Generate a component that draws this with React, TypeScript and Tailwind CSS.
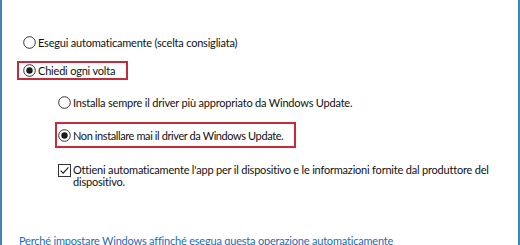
import React from 'react';

const font = { fontFamily: 'Lato, "Noto Sans", sans-serif' };

function Radio({ checked }: { checked?: boolean }) {
    return (
        <svg width="13" height="13" viewBox="0 0 13 13" className="shrink-0">
            <circle cx="6.5" cy="6.5" r="5.8" fill="white" stroke="#333" strokeWidth="1" />
            {checked && <circle cx="6.5" cy="6.5" r="3.2" fill="#1a1a1a" />}
        </svg>
    );
}

function Check() {
    return (
        <svg width="13" height="13" viewBox="0 0 13 13" className="shrink-0">
            <rect x="0.5" y="0.5" width="12" height="12" fill="white" stroke="#333" strokeWidth="1" />
            <path d="M2.6 6.6 L5.2 9.2 L10.4 3.4" fill="none" stroke="#222" strokeWidth="1.2" />
        </svg>
    );
}

export default function App() {
    return (
        <div
            className="w-[520px] h-[245px] overflow-hidden bg-white border-x-2 border-[#3b87b8] text-[#111] text-[11px] leading-[13px] tracking-[-0.2px]"
            style={font}
        >
            <div className="flex flex-col pl-[15px] pt-[34px]">
                {/* Esegui automaticamente */}
                <div className="flex items-center gap-[2px] h-[16px] pl-[6px] whitespace-nowrap">
                    <Radio />
                    <span>Esegui automaticamente (scelta consigliata)</span>
                </div>

                {/* Chiedi ogni volta */}
                <div className="mt-[11px] w-[111px] h-[19px] border-2 border-[#c42b3b] flex items-center gap-[2px] pl-[4px] whitespace-nowrap">
                    <Radio checked />
                    <span>Chiedi ogni volta</span>
                </div>

                <div className="flex flex-col pl-[38px]">
                    <div className="mt-[14px] flex items-center gap-[2px] h-[16px] pl-[3px] whitespace-nowrap">
                        <Radio />
                        <span>Installa sempre il driver più appropriato da Windows Update.</span>
                    </div>

                    <div className="mt-[12px] w-[241px] h-[26px] border-2 border-[#c42b3b] flex items-center gap-[2px] pl-[1px] whitespace-nowrap">
                        <Radio checked />
                        <span className="tracking-[-0.4px]">Non installare mai il driver da Windows Update.</span>
                    </div>

                    <div className="mt-[16px] flex items-start gap-[2px] pl-[3px]">
                        <Check />
                        <span className="w-[420px] leading-[12px]">
                            Ottieni automaticamente l'app per il dispositivo e le informazioni fornite dal produttore del dispositivo.
                        </span>
                    </div>
                </div>

                <div className="mt-[46px] pl-[2px] text-[#1e6bb8] whitespace-nowrap">
                    Perché impostare Windows affinché esegua questa operazione automaticamente
                </div>
            </div>
        </div>
    );
}
